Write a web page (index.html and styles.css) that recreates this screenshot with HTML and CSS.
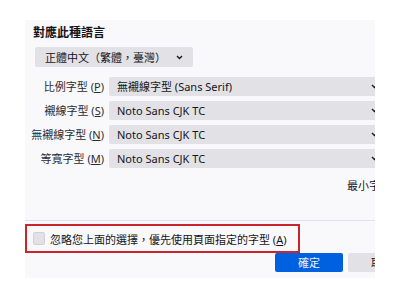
FILE: index.html
```html
<!DOCTYPE html>
<html lang="zh-Hant">
<head>
<meta charset="utf-8">
<title>字型</title>
<link rel="stylesheet" href="styles.css">
</head>
<body>
<div class="panel">
  <div class="heading">對應此種語言</div>
  <div class="select lang">
    <span class="val">正體中文（繁體，臺灣）</span>
    <svg class="chev" width="7" height="5" viewBox="0 0 7 5"><polyline points="1,1 3.5,3.5 6,1" fill="none" stroke="#15141a" stroke-width="1.3"/></svg>
  </div>
  <div class="grid">
    <div class="label">比例字型 (<u>P</u>)</div>
    <div class="select"><span class="val">無襯線字型 (Sans Serif)</span><svg class="chev" width="7" height="5" viewBox="0 0 7 5"><polyline points="1,1 3.5,3.5 6,1" fill="none" stroke="#15141a" stroke-width="1.3"/></svg></div>
    <div class="label">襯線字型 (<u>S</u>)</div>
    <div class="select"><span class="val">Noto Sans CJK TC</span><svg class="chev" width="7" height="5" viewBox="0 0 7 5"><polyline points="1,1 3.5,3.5 6,1" fill="none" stroke="#15141a" stroke-width="1.3"/></svg></div>
    <div class="label">無襯線字型 (<u>N</u>)</div>
    <div class="select"><span class="val">Noto Sans CJK TC</span><svg class="chev" width="7" height="5" viewBox="0 0 7 5"><polyline points="1,1 3.5,3.5 6,1" fill="none" stroke="#15141a" stroke-width="1.3"/></svg></div>
    <div class="label">等寬字型 (<u>M</u>)</div>
    <div class="select"><span class="val">Noto Sans CJK TC</span><svg class="chev" width="7" height="5" viewBox="0 0 7 5"><polyline points="1,1 3.5,3.5 6,1" fill="none" stroke="#15141a" stroke-width="1.3"/></svg></div>
  </div>
  <div class="minsize">最小字型大小</div>
  <div class="sep"></div>
  <div class="override">
    <span class="check"></span>
    <span class="otext">忽略您上面的選擇，優先使用頁面指定的字型 (<u>A</u>)</span>
  </div>
  <div class="buttons">
    <div class="btn primary">確定</div>
    <div class="btn">取消</div>
  </div>
</div>
</body>
</html>
```
FILE: styles.css
```css
* { box-sizing: border-box; }
html, body { margin: 0; padding: 0; background: #ffffff; }
body {
  font-family: "Noto Sans", "Noto Sans CJK TC", sans-serif;
  font-size: 11px;
  color: #15141a;
}
.panel {
  margin: 20px 0 0 25px;
  width: 350px;
  height: 258px;
  background: #f9f9fb;
  overflow: hidden;
  white-space: nowrap;
}
.heading {
  margin: 4px 0 0 8px;
  height: 17px;
  line-height: 17px;
  font-size: 12px;
  font-weight: bold;
}
.select {
  display: flex;
  align-items: center;
  justify-content: space-between;
  height: 19px;
  background: #e2e2e6;
  border-radius: 2px;
  padding: 0 6px 0 8px;
  line-height: 19px;
}
.select.lang {
  margin: 6px 0 0 10px;
  width: 158px;
  height: 20px;
  padding-left: 10px;
  padding-right: 10px;
}
.chev { flex: none; }
.grid {
  margin-top: 10px;
  display: grid;
  grid-template-columns: 79px 275px;
  column-gap: 5px;
  row-gap: 5px;
}
.label {
  text-align: right;
  line-height: 19px;
  color: #2b2a33;
}
.minsize {
  margin-top: 10px;
  padding-left: 322px;
  height: 16px;
  line-height: 16px;
}
.sep {
  margin-top: 26px;
  height: 1px;
  background: #e0e0e6;
}
.override {
  margin-top: 3px;
  width: 275px;
  height: 29px;
  border: 2px solid #c9252d;
  display: flex;
  align-items: center;
  padding-left: 6px;
}
.check {
  width: 12px;
  height: 13px;
  background: #e2e2e6;
  border: 1px solid #d0d0d6;
  border-radius: 2px;
  flex: none;
}
.otext { margin-left: 5px; }
.buttons {
  display: flex;
  gap: 5px;
  padding-left: 250px;
}
.btn {
  flex: none;
  width: 68px;
  height: 19px;
  line-height: 19px;
  text-align: center;
  background: #e2e2e6;
  border-radius: 2px;
}
.btn.primary {
  background: #0061e0;
  color: #e8f0ff;
}
```
